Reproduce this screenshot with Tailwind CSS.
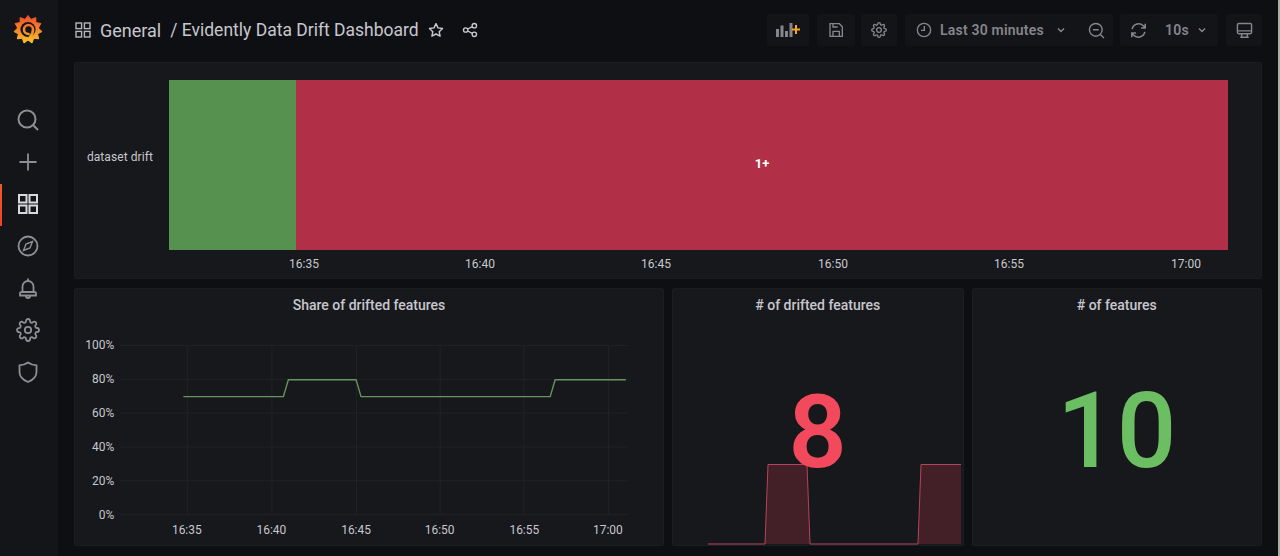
<!DOCTYPE html>
<html lang="en">
<head>
    <meta charset="UTF-8">
    <title>Evidently Data Drift Dashboard</title>
    <script src="https://cdn.jsdelivr.net/npm/@tailwindcss/browser@4"></script>
</head>
<body class="bg-[#0e0f13] text-[#c7c7ce] font-['Roboto',sans-serif] overflow-hidden">
<div class="flex h-[556px] w-[1280px]">
    <!-- sidebar -->
    <aside class="w-[58px] shrink-0 bg-[#141518] flex flex-col items-center relative pr-[2px]">
        <svg class="mt-[14px] w-[30px] h-[30px]" viewBox="0 0 30 30">
            <defs><linearGradient id="gf" gradientUnits="userSpaceOnUse" x1="0" y1="2" x2="0" y2="29"><stop offset="0" stop-color="#ef4f2e"/><stop offset=".55" stop-color="#f58a2a"/><stop offset="1" stop-color="#fbc52c"/></linearGradient></defs>
            <path fill="url(#gf)" stroke="url(#gf)" stroke-width="1" stroke-linejoin="round" d="M15 1.500L18 5.400 22.800 3.600 22.900 8.600 27.800 9.500 25.400 14 28.900 17.600 24.600 19.900 25.700 24.800 20.700 24.300 19 29 15 26 11 29 9.300 24.300 4.300 24.800 5.400 19.900 1.100 17.600 4.600 14 2.200 9.500 7.100 8.600 7.200 3.600 12 5.400z"/>
            <circle cx="15" cy="15.500" r="7.600" fill="#141518"/>
            <path fill="none" stroke="url(#gf)" stroke-width="2.600" stroke-linecap="round" d="M15.500 20a4.500 4.500 0 1 1 4.500-4.500c0 3-1 5.500-3 7.500"/>
        </svg>
        <div class="flex flex-col items-center gap-[18px] mt-[65px] text-[#8e8e95]">
            <svg class="w-6 h-6 -mt-px" viewBox="0 0 24 24" fill="none" stroke="currentColor" stroke-width="2"><circle cx="11" cy="11" r="8.500"/><path d="M17.500 17.500l4.500 4.500"/></svg>
            <svg class="w-6 h-6" viewBox="0 0 24 24" fill="none" stroke="currentColor" stroke-width="1.800"><path d="M12 3.500v17M3.500 12h17"/></svg>
            <svg class="w-6 h-6 text-[#d8d9dd]" viewBox="0 0 24 24" fill="none" stroke="currentColor" stroke-width="2"><rect x="3" y="3" width="7.500" height="7.500"/><rect x="13.500" y="3" width="7.500" height="7.500"/><rect x="3" y="13.500" width="7.500" height="7.500"/><rect x="13.500" y="13.500" width="7.500" height="7.500"/></svg>
            <svg class="w-6 h-6" viewBox="0 0 24 24" fill="none" stroke="currentColor" stroke-width="1.800"><circle cx="12" cy="12" r="9.500"/><path d="M16.500 7.500l-2.500 6.500-6.500 2.500 2.500-6.500z" stroke-width="1.400"/></svg>
            <svg class="w-6 h-6" viewBox="0 0 24 24" fill="none" stroke="currentColor" stroke-width="1.800"><path d="M6.500 16v-5.500a5.500 5.500 0 0 1 11 0V16M4 19.500v-2a1.500 1.500 0 0 1 1.500-1.500h13a1.500 1.500 0 0 1 1.500 1.500v2zM12 5V2.500M10 20a2 2 0 0 0 4 0"/></svg>
            <svg class="w-6 h-6" viewBox="0 0 24 24" fill="none" stroke="currentColor" stroke-width="1.800"><circle cx="12" cy="12" r="3.200"/><path d="M19.400 15a1.650 1.650 0 0 0 .33 1.820l.06.06a2 2 0 0 1 0 2.830 2 2 0 0 1-2.830 0l-.06-.06a1.650 1.650 0 0 0-1.820-.33 1.650 1.650 0 0 0-1 1.510V21a2 2 0 0 1-2 2 2 2 0 0 1-2-2v-.09A1.650 1.650 0 0 0 9 19.400a1.650 1.650 0 0 0-1.820.33l-.06.06a2 2 0 0 1-2.830 0 2 2 0 0 1 0-2.830l.06-.06a1.650 1.650 0 0 0 .33-1.820 1.650 1.650 0 0 0-1.510-1H3a2 2 0 0 1-2-2 2 2 0 0 1 2-2h.09A1.650 1.650 0 0 0 4.600 9a1.650 1.650 0 0 0-.33-1.820l-.06-.06a2 2 0 0 1 0-2.830 2 2 0 0 1 2.830 0l.06.06a1.650 1.650 0 0 0 1.820.33H9a1.650 1.650 0 0 0 1-1.510V3a2 2 0 0 1 2-2 2 2 0 0 1 2 2v.09a1.650 1.650 0 0 0 1 1.510 1.650 1.650 0 0 0 1.820-.33l.06-.06a2 2 0 0 1 2.830 0 2 2 0 0 1 0 2.830l-.06.06a1.650 1.650 0 0 0-.33 1.820V9a1.650 1.650 0 0 0 1.510 1H21a2 2 0 0 1 2 2 2 2 0 0 1-2 2h-.09a1.650 1.650 0 0 0-1.510 1z"/></svg>
            <svg class="w-6 h-6" viewBox="0 0 24 24" fill="none" stroke="currentColor" stroke-width="1.800"><path d="M12 2.500c2.500 1.800 5.500 2.800 8.500 2.800V12c0 4.800-3.500 8-8.500 10-5-2-8.500-5.200-8.500-10V5.300c3 0 6-1 8.500-2.800z"/></svg>
        </div>
        <div class="absolute left-0 top-[184px] w-[2px] h-[42px] bg-gradient-to-b from-[#f05a28] to-[#f0402a]"></div>
    </aside>

    <!-- main -->
    <main class="flex-1 min-w-0 pl-[16px] pr-[16px]">
        <!-- toolbar -->
        <header class="h-[62px] flex items-center pb-[2px]">
            <svg class="w-[16px] h-[16px] ml-[1px] text-[#b5b5bc]" viewBox="0 0 16 16" fill="none" stroke="currentColor" stroke-width="1.400"><rect x="1" y="1" width="5.600" height="5.600"/><rect x="9.400" y="1" width="5.600" height="5.600"/><rect x="1" y="9.400" width="5.600" height="5.600"/><rect x="9.400" y="9.400" width="5.600" height="5.600"/></svg>
            <span class="ml-[9px] mt-[2px] text-[18px] leading-none">General</span>
            <span class="ml-[9px] mt-[2px] text-[17.5px] leading-none whitespace-nowrap">/ Evidently Data Drift Dashboard</span>
            <svg class="ml-[9px] w-[16px] h-[16px]" viewBox="0 0 24 24" fill="none" stroke="currentColor" stroke-width="2.200" stroke-linejoin="round"><path d="M12 2.500l3 6.300 6.800.9-5 4.800 1.300 6.800-6.100-3.300-6.100 3.300 1.300-6.800-5-4.800 6.800-.9z"/></svg>
            <svg class="ml-[18px] w-[16px] h-[16px]" viewBox="0 0 24 24" fill="none" stroke="currentColor" stroke-width="2"><circle cx="5.500" cy="12" r="3.300"/><circle cx="18.500" cy="5.500" r="3.300"/><circle cx="18.500" cy="18.500" r="3.300"/><path d="M8.500 10.500l7-3.500M8.500 13.500l7 3.500"/></svg>

            <div class="ml-auto flex items-center h-[32px] text-[#85858c] text-[14px] font-semibold tracking-[0.2px]">
                <div class="w-[42px] h-full bg-[#131418] rounded-[2px] flex items-center justify-center">
                    <svg class="w-[24px] h-[16px]" viewBox="0 0 24 16"><path fill="#85858c" d="M0 7h3v8H0zM4.500 3.500h3V15h-3zM9 9h3v6H9zM13.500 1h3v14h-3z"/><path fill="#f5a623" d="M16 6.500h3V3h2v3.500h3v2h-3V12h-2V8.500h-3z"/></svg>
                </div>
                <div class="ml-[8px] w-[38px] h-full bg-[#131418] rounded-[2px] flex items-center justify-center">
                    <svg class="w-[16px] h-[16px]" viewBox="0 0 24 24" fill="none" stroke="currentColor" stroke-width="2"><path d="M3 2.500h14l4.500 4.500v14.500H3z"/><path d="M7.500 21v-7h9.500v7M7.500 2.500v5h7"/></svg>
                </div>
                <div class="ml-[6px] w-[36px] h-full bg-[#131418] rounded-[2px] flex items-center justify-center">
                    <svg class="w-[16px] h-[16px]" viewBox="0 0 24 24" fill="none" stroke="currentColor" stroke-width="2"><circle cx="12" cy="12" r="3.500"/><path d="M19.400 15a1.650 1.650 0 0 0 .33 1.820l.06.06a2 2 0 0 1 0 2.830 2 2 0 0 1-2.830 0l-.06-.06a1.650 1.650 0 0 0-1.820-.33 1.650 1.650 0 0 0-1 1.510V21a2 2 0 0 1-2 2 2 2 0 0 1-2-2v-.09A1.650 1.650 0 0 0 9 19.400a1.650 1.650 0 0 0-1.820.33l-.06.06a2 2 0 0 1-2.830 0 2 2 0 0 1 0-2.830l.06-.06a1.650 1.650 0 0 0 .33-1.820 1.650 1.650 0 0 0-1.510-1H3a2 2 0 0 1-2-2 2 2 0 0 1 2-2h.09A1.650 1.650 0 0 0 4.600 9a1.650 1.650 0 0 0-.33-1.820l-.06-.06a2 2 0 0 1 0-2.830 2 2 0 0 1 2.830 0l.06.06a1.650 1.650 0 0 0 1.820.33H9a1.650 1.650 0 0 0 1-1.510V3a2 2 0 0 1 2-2 2 2 0 0 1 2 2v.09a1.650 1.650 0 0 0 1 1.510 1.650 1.650 0 0 0 1.820-.33l.06-.06a2 2 0 0 1 2.830 0 2 2 0 0 1 0 2.830l-.06.06a1.650 1.650 0 0 0-.33 1.820V9a1.650 1.650 0 0 0 1.510 1H21a2 2 0 0 1 2 2 2 2 0 0 1-2 2h-.09a1.650 1.650 0 0 0-1.510 1z"/></svg>
                </div>
                <div class="ml-[8px] w-[208px] h-full bg-[#131418] rounded-[2px] flex items-center">
                    <svg class="ml-[11px] w-[16px] h-[16px]" viewBox="0 0 24 24" fill="none" stroke="currentColor" stroke-width="2"><circle cx="12" cy="12" r="10"/><path d="M12.500 6v6.500H7.500"/></svg>
                    <span class="ml-[8px] whitespace-nowrap">Last 30 minutes</span>
                    <svg class="ml-[12px] w-[10px] h-[10px]" viewBox="0 0 10 10" fill="none" stroke="currentColor" stroke-width="1.500"><path d="M2 3.500l3 3 3-3"/></svg>
                    <svg class="ml-[22px] w-[17px] h-[17px]" viewBox="0 0 24 24" fill="none" stroke="currentColor" stroke-width="2"><circle cx="11" cy="11" r="9"/><path d="M17.500 17.500l5 5M7 11h8"/></svg>
                </div>
                <div class="ml-[7px] w-[98px] h-full bg-[#131418] rounded-[2px] flex items-center">
                    <svg class="ml-[10px] w-[17px] h-[17px]" viewBox="0 0 24 24" fill="none" stroke="currentColor" stroke-width="2.200"><path d="M3 10a9.500 9.500 0 0 1 16.500-4l2 2.500M21 14a9.500 9.500 0 0 1-16.500 4l-2-2.500M21.500 2.500v6h-6M2.500 21.500v-6h6"/></svg>
                    <span class="ml-[18px]">10s</span>
                    <svg class="ml-[8px] w-[10px] h-[10px]" viewBox="0 0 10 10" fill="none" stroke="currentColor" stroke-width="1.500"><path d="M2 3.500l3 3 3-3"/></svg>
                </div>
                <div class="ml-[8px] w-[36px] h-full bg-[#131418] rounded-[2px] flex items-center justify-center">
                    <svg class="w-[17px] h-[17px]" viewBox="0 0 24 24" fill="none" stroke="currentColor" stroke-width="2"><rect x="2" y="2" width="20" height="14.500" rx="2"/><path d="M2 12.500h20M6 21.500h12M8 16.500v5M16 16.500v5"/></svg>
                </div>
            </div>
        </header>

        <!-- state timeline panel -->
        <section class="h-[217px] bg-[#17181c] border border-[#1c1d21] rounded-[2px] flex flex-col">
            <div class="flex h-[170px] mt-[17px]">
                <div class="w-[78px] shrink-0 flex items-center justify-end text-[12px] tracking-[0.08px] pb-[16px]">dataset drift</div>
                <div class="w-[127px] ml-[16px] bg-[#56914f] shrink-0"></div>
                <div class="w-[932px] bg-[#b12f47] flex items-center justify-center pb-[2px] text-white text-[13px] font-bold">1+</div>
            </div>
            <div class="relative h-[14px] mt-[7px] text-[12px] leading-[14px] text-[#c7c7ce]">
                <span class="absolute left-[214px]">16:35</span>
                <span class="absolute left-[390px]">16:40</span>
                <span class="absolute left-[566px]">16:45</span>
                <span class="absolute left-[743px]">16:50</span>
                <span class="absolute left-[919px]">16:55</span>
                <span class="absolute left-[1096px]">17:00</span>
            </div>
        </section>

        <!-- bottom row -->
        <div class="flex mt-[9px] h-[258px] gap-[8px]">
            <section class="w-[590px] bg-[#17181c] border border-[#1c1d21] rounded-[2px] flex flex-col">
                <h2 class="text-[14px] leading-[16px] font-medium text-center mt-[8px]">Share of drifted features</h2>
                <svg class="mt-[8px]" width="588" height="225" viewBox="0 0 588 225" font-family="Roboto, sans-serif" font-size="12" fill="#c7c7ce">
                    <g stroke="#202226" stroke-width="1">
                        <path d="M44 24.500h510M44 58.500h510M44 92.500h510M44 126.500h510M44 160.500h510M44 194.500h510" />
                        <path d="M111.500 24v171M196.500 24v171M281.500 24v171M365.500 24v171M449.500 24v171M534.500 24v171"/>
                    </g>
                    <g text-anchor="end">
                        <text x="38" y="28">100%</text><text x="38" y="62.200">80%</text><text x="38" y="96.400">60%</text><text x="38" y="130.600">40%</text><text x="38" y="164.800">20%</text><text x="38" y="199">0%</text>
                    </g>
                    <g text-anchor="middle">
                        <text x="111" y="214">16:35</text><text x="196" y="214">16:40</text><text x="281" y="214">16:45</text><text x="365" y="214">16:50</text><text x="450" y="214">16:55</text><text x="534" y="214">17:00</text>
                    </g>
                    <path fill="none" stroke="#66945f" stroke-width="1.400" d="M107.500 76H208L213 59H281L286 76H476L481 59H552"/>
                </svg>
            </section>

            <section class="w-[292px] bg-[#17181c] border border-[#1c1d21] rounded-[2px] flex flex-col relative overflow-hidden">
                <h2 class="text-[14px] leading-[16px] font-medium text-center mt-[8px]"># of drifted features</h2>
                <svg class="absolute left-0 bottom-0" width="290" height="85" viewBox="0 0 290 85">
                    <path fill="#431f27" d="M35 84H92L95 4.500H134L137 84H245L248 4.500H288V84z"/>
                    <path fill="none" stroke="#b4455a" stroke-width="1" d="M35 84H92L95 4.500H134L137 84H245L248 4.500H288"/>
                </svg>
                <div class="relative text-center text-[#f2495c] text-[102px] leading-[108px] font-semibold mt-[65px]">8</div>
            </section>

            <section class="w-[291px] bg-[#17181c] border border-[#1c1d21] rounded-[2px] flex flex-col">
                <h2 class="text-[14px] leading-[16px] font-medium text-center mt-[8px]"># of features</h2>
                <div class="text-center text-[#6cbe62] text-[105px] leading-[108px] font-medium mt-[65px]">10</div>
            </section>
        </div>
    </main>
    <div class="w-[2px] shrink-0 bg-[#a9b0a5]"></div>
</div>
</body>
</html>
